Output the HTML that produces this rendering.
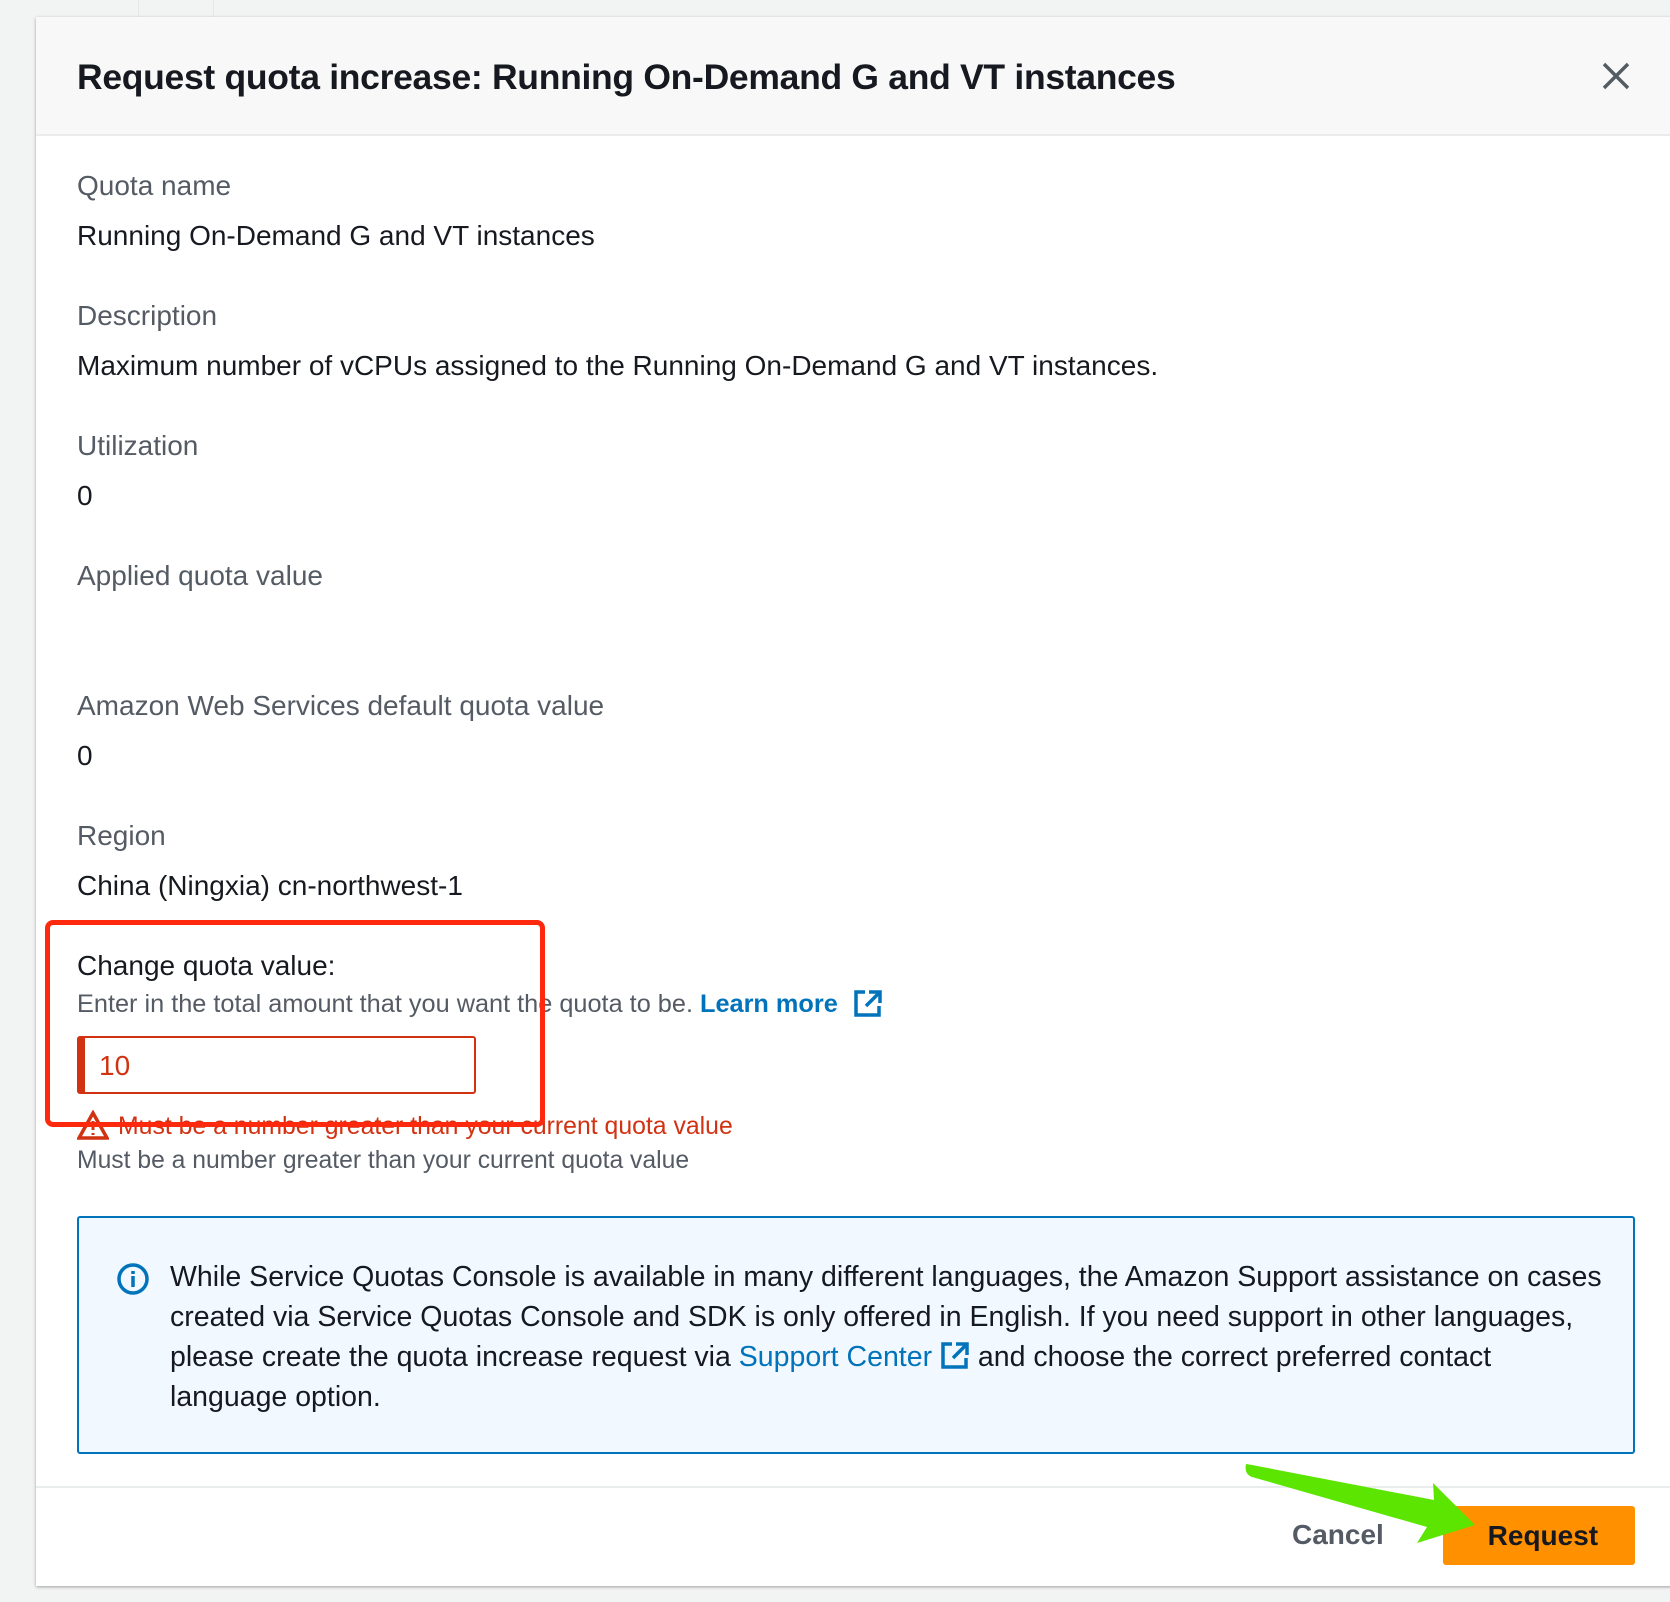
<!DOCTYPE html>
<html><head><style>
body{margin:0;width:1670px;height:1602px;background:#f2f3f3;font-family:"Liberation Sans",Arial,sans-serif;position:relative;overflow:hidden;color:#16191f}
.modal{position:absolute;left:36px;top:17px;width:1640px;height:1569px;background:#fff;box-shadow:0 1px 3px rgba(0,0,0,.35)}
.hdr{position:absolute;left:0;top:0;right:0;height:117px;background:#f8f8f8;border-bottom:2px solid #e9ebed}
.title{position:absolute;left:41px;top:40px;font-size:35.5px;font-weight:bold;letter-spacing:-0.3px}
.t{position:absolute;left:41px;font-size:28px;white-space:nowrap}
.l{color:#545b64}
.abs{position:absolute}
</style></head><body>
<div class="abs" style="left:138px;top:0;width:1px;height:17px;background:#e5e7e8"></div>
<div class="abs" style="left:213px;top:0;width:1px;height:17px;background:#e5e7e8"></div>
<div class="modal">
<div class="hdr">
<div class="title">Request quota increase: Running On-Demand G and VT instances</div>
<svg class="abs" style="left:1566px;top:45px" width="28" height="28" viewBox="0 0 28 28"><path d="M2 2L26 26M26 2L2 26" stroke="#545b64" stroke-width="3.5"/></svg>
</div>
<div class="t l" style="top:153px">Quota name</div>
<div class="t" style="top:203px">Running On-Demand G and VT instances</div>
<div class="t l" style="top:283px">Description</div>
<div class="t" style="top:333px">Maximum number of vCPUs assigned to the Running On-Demand G and VT instances.</div>
<div class="t l" style="top:413px">Utilization</div>
<div class="t" style="top:463px">0</div>
<div class="t l" style="top:543px">Applied quota value</div>
<div class="t l" style="top:673px">Amazon Web Services default quota value</div>
<div class="t" style="top:723px">0</div>
<div class="t l" style="top:803px">Region</div>
<div class="t" style="top:853px">China (Ningxia) cn-northwest-1</div>
<div class="t" style="top:933px">Change quota value:</div>
<div class="t l" style="top:972px;font-size:25.3px">Enter in the total amount that you want the quota to be. <b style="color:#0073bb">Learn more</b>
<svg width="30" height="28" viewBox="0 0 30 28" style="vertical-align:-5px;margin-left:8px"><path d="M12 3H3v23h23v-9" fill="none" stroke="#0073bb" stroke-width="3.5"/><path d="M16 3h11v11M27 3L13 17" fill="none" stroke="#0073bb" stroke-width="3.5"/></svg></div>
<div class="abs" style="left:41px;top:1019px;width:399px;height:58px;border:2px solid #d13212;border-left:8px solid #d13212;border-radius:3px;box-sizing:border-box"></div>
<div class="t" style="top:1033px;left:63px;color:#d13212">10</div>
<svg class="abs" style="left:41px;top:1093px" width="32" height="30" viewBox="0 0 32 30"><path d="M16 3L30 28H2Z" fill="none" stroke="#d13212" stroke-width="3.5"/><path d="M16 11v9M16 23v2" stroke="#d13212" stroke-width="3"/></svg>
<div class="t" style="top:1096px;left:82px;font-size:24.8px;color:#d13212">Must be a number greater than your current quota value</div>
<div class="t l" style="top:1130px;font-size:24.7px">Must be a number greater than your current quota value</div>
<div class="abs" style="left:9px;top:903px;width:500px;height:207px;border:5px solid #ff2a0e;border-radius:8px;box-sizing:border-box"></div>
<div class="abs" style="left:41px;top:1199px;width:1558px;height:238px;background:#f1f8ff;border:2px solid #0073bb;border-radius:3px;box-sizing:border-box"></div>
<svg class="abs" style="left:80px;top:1245px" width="34" height="34" viewBox="0 0 34 34"><circle cx="17" cy="17" r="14" fill="none" stroke="#0073bb" stroke-width="3.5"/><path d="M17 14v11M17 9v3" stroke="#0073bb" stroke-width="3.5"/></svg>
<div class="abs" style="left:134px;top:1240px;width:1445px;font-size:28.5px;line-height:40px;color:#16191f">While Service Quotas Console is available in many different languages, the Amazon Support assistance on cases created via Service Quotas Console and SDK is only offered in English. If you need support in other languages,<br>please create the quota increase request via <span style="color:#0073bb">Support Center</span> <svg width="30" height="28" viewBox="0 0 30 28" style="vertical-align:-3px"><path d="M12 3H3v23h23v-9" fill="none" stroke="#0073bb" stroke-width="3.5"/><path d="M16 3h11v11M27 3L13 17" fill="none" stroke="#0073bb" stroke-width="3.5"/></svg> and choose the correct preferred contact<br>language option.</div>
<div class="abs" style="left:0;right:0;top:1469px;height:2px;background:#eaeded"></div>
<div class="abs" style="left:1256px;top:1502px;font-size:28px;font-weight:bold;color:#545b64">Cancel</div>
<div class="abs" style="left:1407px;top:1489px;width:192px;height:59px;background:#ff9000;border-radius:3px;font-size:28px;font-weight:bold;text-align:center;line-height:59px;color:#16191f">&nbsp;Request</div>
</div>
<svg class="abs" style="left:0;top:0" width="1670" height="1602"><path d="M1246 1464 Q1244 1474 1252 1477 L1427 1527 L1417 1543 L1475 1525 L1433 1483 L1434 1500 L1252 1465 Z" fill="#5ce500"/></svg>
</body></html>
